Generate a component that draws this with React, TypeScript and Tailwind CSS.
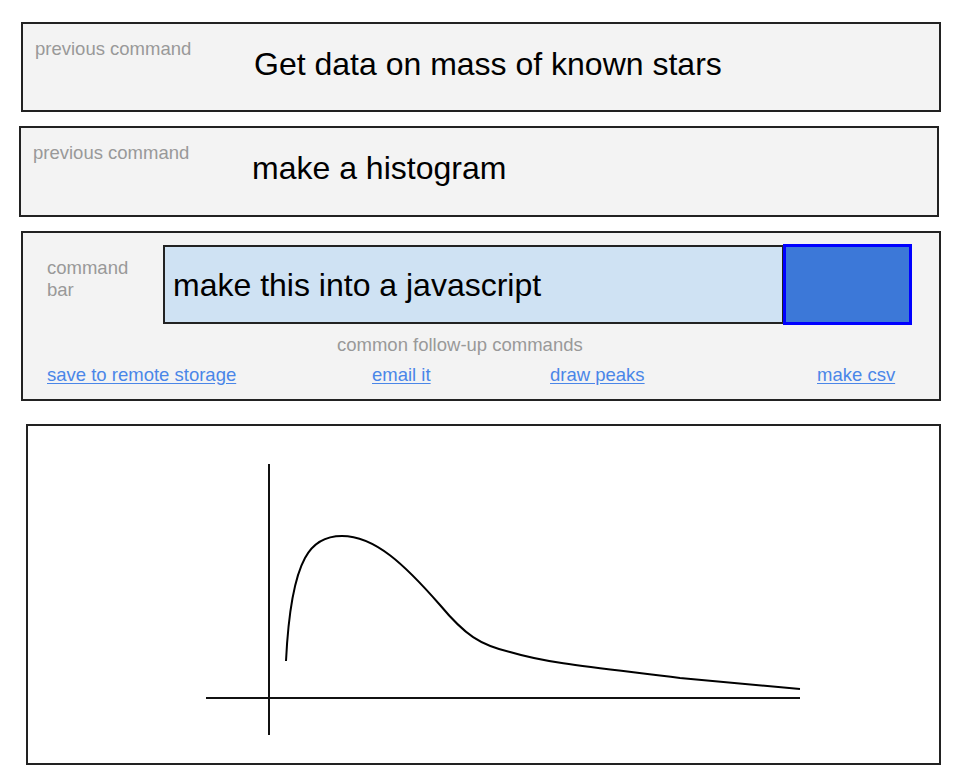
import React from "react";

const font = "font-['Liberation_Sans',Arial,sans-serif]";

const PreviousCommand = ({ text, offset }: { text: string; offset: string }) => {
  return (
    <div
      className={`${offset} box-border flex w-[920px] items-start border-2 border-[#222] bg-[#f3f3f3] pl-[12px]`}
    >
      <div className="mt-[14px] w-[219px] text-[18.5px] leading-[22px] text-[#999]">
        previous command
      </div>
      <div className="mt-[22px] text-[32px] leading-[36px] text-black">{text}</div>
    </div>
  );
};

const links = ["save to remote storage", "email it", "draw peaks", "make csv"];

const CommandBar = () => {
  return (
    <div className="ml-[21px] mt-[14px] box-border flex h-[170px] w-[920px] flex-col border-2 border-[#222] bg-[#f3f3f3] pl-[24px] pr-[27px] pt-[11px]">
      <div className="flex items-start">
        <div className="mt-[13px] w-[116px] text-[18.5px] leading-[22px] text-[#999]">
          command
          <br />
          bar
        </div>
        <div className="mt-px box-border flex h-[79px] flex-1 items-center border-2 border-[#222] bg-[#cfe2f3] pl-[8px] text-[32px] leading-[36px] text-black">
          make this into a javascript
        </div>
        <button className="-ml-px box-border h-[81px] w-[129px] border-[3px] border-[#0000ff] bg-[#3c78d8]" />
      </div>
      <div className="ml-[290px] mt-[9px] text-[18.5px] leading-[22px] text-[#999]">
        common follow-up commands
      </div>
      <div className="mt-[8px] grid grid-cols-[325px_178px_267px_1fr] text-[18.5px] leading-[22px]">
        {links.map((l) => (
          <a key={l} href="#" className="text-[#4a86e8] underline underline-offset-2">
            {l}
          </a>
        ))}
      </div>
    </div>
  );
};

const Chart = () => {
  return (
    <div className="ml-[26px] mt-[23px] box-border h-[341px] w-[915px] border-2 border-[#222] bg-white">
      <svg width="911" height="337" viewBox="28 426 911 337" className="block">
        <line x1="269" y1="464" x2="269" y2="735" stroke="#111" strokeWidth="2" />
        <line x1="206" y1="698" x2="800" y2="698" stroke="#111" strokeWidth="2" />
        <path
          d="M286 661 C288 620 293 580 305 558 C313 543 325 536 342 536 C375 536 405 565 440 605 C465 635 480 645 510 652 C550 664 600 668 680 678 L800 689"
          fill="none"
          stroke="#000"
          strokeWidth="2"
        />
      </svg>
    </div>
  );
};

export default function App() {
  return (
    <div className={`${font} min-h-[782px] w-[954px] bg-white pt-[22px]`}>
      <PreviousCommand offset="ml-[21px] h-[90px]" text="Get data on mass of known stars" />
      <div className="mt-[14px]">
        <PreviousCommand offset="ml-[19px] h-[91px]" text="make a histogram" />
      </div>
      <CommandBar />
      <Chart />
    </div>
  );
}
